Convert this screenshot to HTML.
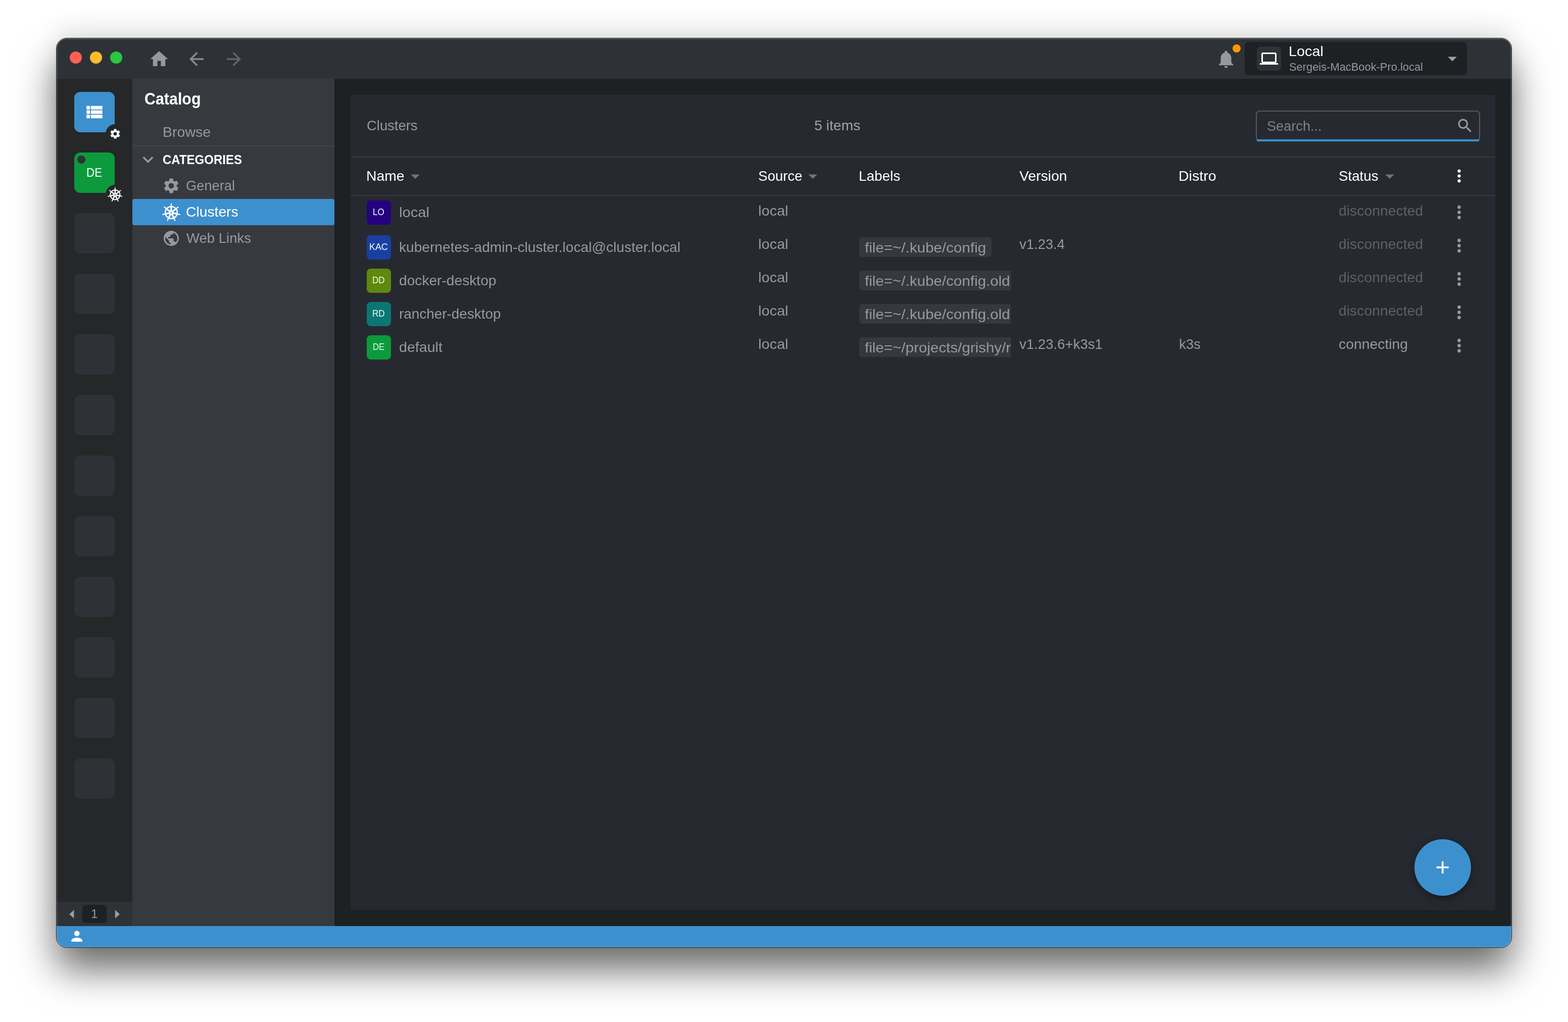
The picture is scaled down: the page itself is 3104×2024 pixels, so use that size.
<!DOCTYPE html>
<html lang="en"><head><meta charset="utf-8"><title>Lens - Catalog</title>
<style>
html,body{margin:0;padding:0;}
body{width:3104px;height:2024px;background:#ffffff;position:relative;overflow:hidden;font-family:"Liberation Sans", sans-serif;}
#shadow{position:absolute;left:112px;top:76px;width:2880px;height:1800px;border-radius:20px;
  box-shadow:0 43px 77px rgba(0,0,0,.6),0 -31px 41px rgba(0,0,0,.052);}
#win{position:absolute;left:0;top:0;width:3104px;height:2024px;clip-path:inset(76px 112px 148px 112px round 20px);will-change:transform;}
#rim{position:absolute;left:111px;top:75px;width:2882px;height:1802px;border-radius:21px;box-sizing:border-box;
  border:1px solid rgba(0,0,0,.85);
  box-shadow:inset 0 1px 0 rgba(255,255,255,.14),inset 0 0 0 1px rgba(255,255,255,.2),inset 0 0 0 2px rgba(255,255,255,.07);pointer-events:none;}
.b{position:absolute;}
.i{position:absolute;display:block;}
.t{position:absolute;white-space:nowrap;font-family:"Liberation Sans", sans-serif;transform-origin:0 0;}
</style></head>
<body>
<div id="shadow"></div>
<div id="win">
<header id="titlebar">
<div class="b" style="left:112px;top:76px;width:2880px;height:80px;background:#2e3136;"></div>
<div class="b" style="left:138px;top:102px;width:24px;height:24px;background:#fe5f57;border-radius:50%;"></div>
<div class="b" style="left:178px;top:102px;width:24px;height:24px;background:#febc2e;border-radius:50%;"></div>
<div class="b" style="left:218px;top:102px;width:24px;height:24px;background:#28c840;border-radius:50%;"></div>
<svg class="i" style="left:294.00px;top:96.00px;width:42px;height:42px" viewBox="0 0 24 24"><path fill="#959aa1" d="M10 20v-6h4v6h5v-8h3L12 3 2 12h3v8z"/></svg>
<svg class="i" style="left:368.00px;top:96.00px;width:42px;height:42px;opacity:0.85" viewBox="0 0 24 24"><path fill="#959aa1" d="M20 11H7.83l5.59-5.59L12 4l-8 8 8 8 1.41-1.41L7.83 13H20v-2z"/></svg>
<svg class="i" style="left:442.00px;top:96.00px;width:42px;height:42px;opacity:0.5" viewBox="0 0 24 24"><path fill="#959aa1" d="M12 4l-1.41 1.41L16.17 11H4v2h12.17l-5.58 5.59L12 20l8-8z"/></svg>
<svg class="i" style="left:2406.00px;top:95.70px;width:42px;height:42px" viewBox="0 0 24 24"><path fill="#959aa1" d="M12 22c1.1 0 2-.9 2-2h-4c0 1.1.89 2 2 2zm6-6v-5c0-3.07-1.64-5.64-4.5-6.32V4c0-.83-.67-1.5-1.5-1.5s-1.5.67-1.5 1.5v.68C7.63 5.36 6 7.92 6 11v5l-2 2v1h16v-1l-2-2z"/></svg>
<div class="b" style="left:2440px;top:88px;width:16px;height:16px;background:#ff9800;border-radius:50%;"></div>
<div class="b" style="left:2464px;top:83px;width:440px;height:66px;background:#1e2124;border-radius:8px;"></div>
<div class="b" style="left:2488px;top:92px;width:48px;height:48px;background:#2e3136;border-radius:8px;"></div>
<svg class="i" style="left:2494.00px;top:98.00px;width:36px;height:36px" viewBox="0 0 24 24"><path fill="#ffffff" d="M20 18c1.1 0 1.99-.9 1.99-2L22 6c0-1.1-.9-2-2-2H4c-1.1 0-2 .9-2 2v10c0 1.1.9 2 2 2H0v2h24v-2h-4zM4 6h16v10H4V6z"/></svg>
<span class="t" style="left:2551.08px;top:85px;font-size:28.5px;line-height:32px;color:#ffffff;transform:scaleX(1.0123);">Local</span>
<span class="t" style="left:2551.52px;top:120px;font-size:22.4px;line-height:25px;color:#959aa1;transform:scaleX(0.9766);">Sergeis-MacBook-Pro.local</span>
<svg class="i" style="left:2854.00px;top:94.50px;width:42px;height:42px" viewBox="0 0 24 24"><path fill="#a0a4a8" d="M7 10l5 5 5-5z"/></svg>
</header>
<nav id="hotbar">
<div class="b" style="left:112px;top:156px;width:150px;height:1678px;background:#252729;"></div>
<div class="b" style="left:147px;top:182px;width:80px;height:80px;background:#3d90ce;border-radius:12px;"></div>
<svg class="i" style="left:166.00px;top:201.00px;width:42px;height:42px" viewBox="0 0 24 24"><path fill="#ffffff" d="M3 14h4v-4H3v4zm0 5h4v-4H3v4zM3 9h4V5H3v4zm5 5h13v-4H8v4zm0 5h13v-4H8v4zM8 5v4h13V5H8z"/></svg>
<div class="b" style="left:209px;top:246px;width:38px;height:38px;background:#252729;border-radius:50%;"></div>
<svg class="i" style="left:216.00px;top:253.00px;width:24px;height:24px" viewBox="0 0 24 24"><path fill="#ffffff" d="M19.14 12.94c.04-.3.06-.61.06-.94 0-.32-.02-.64-.07-.94l2.03-1.58c.18-.14.23-.41.12-.61l-1.92-3.32c-.12-.22-.37-.29-.59-.22l-2.39.96c-.5-.38-1.03-.7-1.62-.94l-.36-2.54c-.04-.24-.24-.41-.48-.41h-3.84c-.24 0-.43.17-.47.41l-.36 2.54c-.59.24-1.13.57-1.62.94l-2.39-.96c-.22-.08-.47 0-.59.22L2.74 8.87c-.12.21-.08.47.12.61l2.03 1.58c-.05.3-.09.63-.09.94s.02.64.07.94l-2.03 1.58c-.18.14-.23.41-.12.61l1.92 3.32c.12.22.37.29.59.22l2.39-.96c.5.38 1.03.7 1.62.94l.36 2.54c.05.24.24.41.48.41h3.84c.24 0 .44-.17.47-.41l.36-2.54c.59-.24 1.13-.56 1.62-.94l2.39.96c.22.08.47 0 .59-.22l1.92-3.32c.12-.22.07-.47-.12-.61l-2.01-1.58zM12 15.6c-1.98 0-3.6-1.62-3.6-3.6s1.62-3.6 3.6-3.6 3.6 1.62 3.6 3.6-1.62 3.6-3.6 3.6z"/></svg>
<div class="b" style="left:147px;top:302px;width:80px;height:80px;background:#0c9a3c;border-radius:12px;"></div>
<div class="b" style="left:153px;top:308px;width:16px;height:16px;background:#2e3136;border-radius:50%;"></div>
<span class="t" style="left:171.07px;top:328px;font-size:24.43px;line-height:27px;color:#ffffff;transform:scaleX(0.9167);">DE</span>
<div class="b" style="left:209px;top:366px;width:38px;height:38px;background:#252729;border-radius:50%;"></div>
<svg class="i" style="left:210.18px;top:367.58px;width:35.64px;height:35.64px" viewBox="-17.82 -17.82 35.64 35.64"><circle cx="0" cy="0" r="9.64" fill="none" stroke="#ffffff" stroke-width="2.03"/><circle cx="0" cy="0" r="2.43" fill="none" stroke="#ffffff" stroke-width="2.35"/><line x1="0.00" y1="-2.92" x2="0.00" y2="-9.64" stroke="#ffffff" stroke-width="2.67"/><line x1="0.00" y1="-9.64" x2="0.00" y2="-14.01" stroke="#ffffff" stroke-width="1.78" stroke-linecap="round"/><line x1="2.28" y1="-1.82" x2="7.54" y2="-6.01" stroke="#ffffff" stroke-width="2.67"/><line x1="7.54" y1="-6.01" x2="10.96" y2="-8.74" stroke="#ffffff" stroke-width="1.78" stroke-linecap="round"/><line x1="2.84" y1="0.65" x2="9.40" y2="2.14" stroke="#ffffff" stroke-width="2.67"/><line x1="9.40" y1="2.14" x2="13.66" y2="3.12" stroke="#ffffff" stroke-width="1.78" stroke-linecap="round"/><line x1="1.27" y1="2.63" x2="4.18" y2="8.68" stroke="#ffffff" stroke-width="2.67"/><line x1="4.18" y1="8.68" x2="6.08" y2="12.63" stroke="#ffffff" stroke-width="1.78" stroke-linecap="round"/><line x1="-1.27" y1="2.63" x2="-4.18" y2="8.68" stroke="#ffffff" stroke-width="2.67"/><line x1="-4.18" y1="8.68" x2="-6.08" y2="12.63" stroke="#ffffff" stroke-width="1.78" stroke-linecap="round"/><line x1="-2.84" y1="0.65" x2="-9.40" y2="2.14" stroke="#ffffff" stroke-width="2.67"/><line x1="-9.40" y1="2.14" x2="-13.66" y2="3.12" stroke="#ffffff" stroke-width="1.78" stroke-linecap="round"/><line x1="-2.28" y1="-1.82" x2="-7.54" y2="-6.01" stroke="#ffffff" stroke-width="2.67"/><line x1="-7.54" y1="-6.01" x2="-10.96" y2="-8.74" stroke="#ffffff" stroke-width="1.78" stroke-linecap="round"/></svg>
<div class="b" style="left:147px;top:422px;width:80px;height:80px;background:#2e3136;border-radius:12px;"></div>
<div class="b" style="left:147px;top:542px;width:80px;height:80px;background:#2e3136;border-radius:12px;"></div>
<div class="b" style="left:147px;top:662px;width:80px;height:80px;background:#2e3136;border-radius:12px;"></div>
<div class="b" style="left:147px;top:782px;width:80px;height:80px;background:#2e3136;border-radius:12px;"></div>
<div class="b" style="left:147px;top:902px;width:80px;height:80px;background:#2e3136;border-radius:12px;"></div>
<div class="b" style="left:147px;top:1022px;width:80px;height:80px;background:#2e3136;border-radius:12px;"></div>
<div class="b" style="left:147px;top:1142px;width:80px;height:80px;background:#2e3136;border-radius:12px;"></div>
<div class="b" style="left:147px;top:1262px;width:80px;height:80px;background:#2e3136;border-radius:12px;"></div>
<div class="b" style="left:147px;top:1382px;width:80px;height:80px;background:#2e3136;border-radius:12px;"></div>
<div class="b" style="left:147px;top:1502px;width:80px;height:80px;background:#2e3136;border-radius:12px;"></div>
<div class="b" style="left:112px;top:1786px;width:150px;height:48px;background:#2e3136;"></div>
<div class="b" style="left:163px;top:1792px;width:48px;height:36px;background:#1e2124;border-radius:7px;"></div>
<span class="t" style="left:180.00px;top:1796px;font-size:24.43px;line-height:27px;color:#959aa1;">1</span>
<svg class="i" style="left:136.2px;top:1800.6px;width:11.3px;height:18.8px" viewBox="0 0 12 20"><path fill="#9c9fa3" d="M11 1L1.4 10 11 19z"/></svg>
<svg class="i" style="left:226.8px;top:1800.6px;width:11.3px;height:18.8px" viewBox="0 0 12 20"><path fill="#9c9fa3" d="M1 1l9.6 9L1 19z"/></svg>
</nav>
<aside id="sidebar">
<div class="b" style="left:262px;top:156px;width:400px;height:1678px;background:#36393e;"></div>
<span class="t" style="left:286.07px;top:178px;font-size:32.58px;line-height:36px;color:#ffffff;font-weight:700;transform:scaleX(0.9334);">Catalog</span>
<span class="t" style="left:321.80px;top:245px;font-size:28.5px;line-height:32px;color:#959aa1;transform:scaleX(1.0024);">Browse</span>
<div class="b" style="left:262px;top:288px;width:400px;height:2px;background:#414448;"></div>
<svg class="i" style="left:272.00px;top:295.00px;width:42px;height:42px" viewBox="0 0 24 24"><path fill="#959aa1" d="M16.59 8.59L12 13.17 7.41 8.59 6 10l6 6 6-6z"/></svg>
<span class="t" style="left:321.89px;top:301px;font-size:26.47px;line-height:30px;color:#ffffff;font-weight:700;transform:scaleX(0.9073);">CATEGORIES</span>
<svg class="i" style="left:321.00px;top:350.20px;width:36px;height:36px" viewBox="0 0 24 24"><path fill="#959aa1" d="M19.14 12.94c.04-.3.06-.61.06-.94 0-.32-.02-.64-.07-.94l2.03-1.58c.18-.14.23-.41.12-.61l-1.92-3.32c-.12-.22-.37-.29-.59-.22l-2.39.96c-.5-.38-1.03-.7-1.62-.94l-.36-2.54c-.04-.24-.24-.41-.48-.41h-3.84c-.24 0-.43.17-.47.41l-.36 2.54c-.59.24-1.13.57-1.62.94l-2.39-.96c-.22-.08-.47 0-.59.22L2.74 8.87c-.12.21-.08.47.12.61l2.03 1.58c-.05.3-.09.63-.09.94s.02.64.07.94l-2.03 1.58c-.18.14-.23.41-.12.61l1.92 3.32c.12.22.37.29.59.22l2.39-.96c.5.38 1.03.7 1.62.94l.36 2.54c.05.24.24.41.48.41h3.84c.24 0 .44-.17.47-.41l.36-2.54c.59-.24 1.13-.56 1.62-.94l2.39.96c.22.08.47 0 .59-.22l1.92-3.32c.12-.22.07-.47-.12-.61l-2.01-1.58zM12 15.6c-1.98 0-3.6-1.62-3.6-3.6s1.62-3.6 3.6-3.6 3.6 1.62 3.6 3.6-1.62 3.6-3.6 3.6z"/></svg>
<span class="t" style="left:368.04px;top:351px;font-size:28.5px;line-height:32px;color:#959aa1;transform:scaleX(0.9570);">General</span>
<div class="b" style="left:262px;top:394px;width:400px;height:52px;background:#3d90ce;border-radius:4px;"></div>
<svg class="i" style="left:317.10px;top:398.90px;width:44.00px;height:44.00px" viewBox="-22.00 -22.00 44.00 44.00"><circle cx="0" cy="0" r="11.90" fill="none" stroke="#ffffff" stroke-width="2.50"/><circle cx="0" cy="0" r="3.00" fill="none" stroke="#ffffff" stroke-width="2.90"/><line x1="0.00" y1="-3.60" x2="0.00" y2="-11.90" stroke="#ffffff" stroke-width="3.30"/><line x1="0.00" y1="-11.90" x2="0.00" y2="-17.30" stroke="#ffffff" stroke-width="2.20" stroke-linecap="round"/><line x1="2.81" y1="-2.24" x2="9.30" y2="-7.42" stroke="#ffffff" stroke-width="3.30"/><line x1="9.30" y1="-7.42" x2="13.53" y2="-10.79" stroke="#ffffff" stroke-width="2.20" stroke-linecap="round"/><line x1="3.51" y1="0.80" x2="11.60" y2="2.65" stroke="#ffffff" stroke-width="3.30"/><line x1="11.60" y1="2.65" x2="16.87" y2="3.85" stroke="#ffffff" stroke-width="2.20" stroke-linecap="round"/><line x1="1.56" y1="3.24" x2="5.16" y2="10.72" stroke="#ffffff" stroke-width="3.30"/><line x1="5.16" y1="10.72" x2="7.51" y2="15.59" stroke="#ffffff" stroke-width="2.20" stroke-linecap="round"/><line x1="-1.56" y1="3.24" x2="-5.16" y2="10.72" stroke="#ffffff" stroke-width="3.30"/><line x1="-5.16" y1="10.72" x2="-7.51" y2="15.59" stroke="#ffffff" stroke-width="2.20" stroke-linecap="round"/><line x1="-3.51" y1="0.80" x2="-11.60" y2="2.65" stroke="#ffffff" stroke-width="3.30"/><line x1="-11.60" y1="2.65" x2="-16.87" y2="3.85" stroke="#ffffff" stroke-width="2.20" stroke-linecap="round"/><line x1="-2.81" y1="-2.24" x2="-9.30" y2="-7.42" stroke="#ffffff" stroke-width="3.30"/><line x1="-9.30" y1="-7.42" x2="-13.53" y2="-10.79" stroke="#ffffff" stroke-width="2.20" stroke-linecap="round"/></svg>
<span class="t" style="left:368.21px;top:403px;font-size:28.5px;line-height:32px;color:#ffffff;transform:scaleX(0.9915);">Clusters</span>
<svg class="i" style="left:321.00px;top:454.20px;width:36px;height:36px" viewBox="0 0 24 24"><path fill="#959aa1" d="M12 2C6.48 2 2 6.48 2 12s4.48 10 10 10 10-4.48 10-10S17.52 2 12 2zm-1 17.93c-3.95-.49-7-3.85-7-7.93 0-.62.08-1.21.21-1.79L9 15v1c0 1.1.9 2 2 2v1.93zm6.9-2.54c-.26-.81-1-1.39-1.9-1.39h-1v-3c0-.55-.45-1-1-1H8v-2h2c.55 0 1-.45 1-1V7h2c1.1 0 2-.9 2-2v-.41c2.93 1.19 5 4.06 5 7.41 0 2.08-.8 3.97-2.1 5.39z"/></svg>
<span class="t" style="left:369.20px;top:455px;font-size:28.5px;line-height:32px;color:#959aa1;transform:scaleX(0.9661);">Web Links</span>
</aside>
<main id="catalog">
<div class="b" style="left:662px;top:156px;width:2330px;height:1678px;background:#1e2124;"></div>
<div class="b" style="left:694px;top:188px;width:2266px;height:1614px;background:#262a30;"></div>
<span class="t" style="left:725.94px;top:232px;font-size:28.5px;line-height:32px;color:#959aa1;transform:scaleX(0.9615);">Clusters</span>
<span class="t" style="left:1611.61px;top:232px;font-size:28.5px;line-height:32px;color:#a0a3a7;transform:scaleX(0.9933);">5 items</span>
<div class="b" style="left:2486px;top:219px;width:444px;height:61px;background:transparent;border-radius:8px;box-sizing:border-box;border:2px solid #565b61;"></div>
<div class="b" style="left:2488px;top:276px;width:440px;height:4px;background:#3d90ce;"></div>
<span class="t" style="left:2507.75px;top:233px;font-size:28.5px;line-height:32px;color:#7f8388;transform:scaleX(0.9520);">Search...</span>
<svg class="i" style="left:2882.00px;top:230.80px;width:36px;height:36px" viewBox="0 0 24 24"><path fill="#9a9da1" d="M15.5 14h-.79l-.28-.27C15.41 12.59 16 11.11 16 9.5 16 5.91 13.09 3 9.5 3S3 5.91 3 9.5 5.91 16 9.5 16c1.61 0 3.09-.59 4.23-1.57l.27.28v.79l5 4.99L20.49 19l-4.99-5zm-6 0C7.01 14 5 11.99 5 9.5S7.01 5 9.5 5 14 7.01 14 9.5 11.99 14 9.5 14z"/></svg>
<div class="b" style="left:694px;top:310px;width:2266px;height:2px;background:#373a3e;"></div>
<span class="t" style="left:725.01px;top:332px;font-size:28.5px;line-height:32px;color:#ffffff;transform:scaleX(0.9949);">Name</span>
<svg class="i" style="left:800.80px;top:327.60px;width:42px;height:42px" viewBox="0 0 24 24"><path fill="#6f747a" d="M7 10l5 5 5-5z"/></svg>
<span class="t" style="left:1500.63px;top:332px;font-size:28.5px;line-height:32px;color:#ffffff;transform:scaleX(0.9678);">Source</span>
<svg class="i" style="left:1587.60px;top:327.60px;width:42px;height:42px" viewBox="0 0 24 24"><path fill="#6f747a" d="M7 10l5 5 5-5z"/></svg>
<span class="t" style="left:1699.94px;top:332px;font-size:28.5px;line-height:32px;color:#ffffff;transform:scaleX(0.9788);">Labels</span>
<span class="t" style="left:2017.90px;top:332px;font-size:28.5px;line-height:32px;color:#ffffff;transform:scaleX(0.9924);">Version</span>
<span class="t" style="left:2333.00px;top:332px;font-size:28.5px;line-height:32px;color:#ffffff;transform:scaleX(1.0018);">Distro</span>
<span class="t" style="left:2650.03px;top:332px;font-size:28.5px;line-height:32px;color:#ffffff;transform:scaleX(0.9730);">Status</span>
<svg class="i" style="left:2730.00px;top:327.60px;width:42px;height:42px" viewBox="0 0 24 24"><path fill="#6f747a" d="M7 10l5 5 5-5z"/></svg>
<svg class="i" style="left:2869.10px;top:329.40px;width:39px;height:39px" viewBox="0 0 24 24"><path fill="#ffffff" d="M12 8c1.1 0 2-.9 2-2s-.9-2-2-2-2 .9-2 2 .9 2 2 2zm0 2c-1.1 0-2 .9-2 2s.9 2 2 2 2-.9 2-2-.9-2-2-2zm0 6c-1.1 0-2 .9-2 2s.9 2 2 2 2-.9 2-2-.9-2-2-2z"/></svg>
<div class="b" style="left:694px;top:386px;width:2266px;height:2px;background:#373a3e;"></div>
<div class="b" style="left:726px;top:397px;width:48px;height:48px;background:#25007f;border-radius:8px;"></div>
<span class="t" style="left:738.38px;top:409px;font-size:18.32px;line-height:21px;color:#fdf5ff;transform:scaleX(0.9230);">LO</span>
<span class="t" style="left:789.77px;top:404px;font-size:28.5px;line-height:32px;color:#959aa1;transform:scaleX(1.0252);">local</span>
<span class="t" style="left:1501.19px;top:401px;font-size:28.5px;line-height:32px;color:#959aa1;transform:scaleX(1.0127);">local</span>
<span class="t" style="left:2650.00px;top:401px;font-size:28.5px;line-height:32px;color:#5d6166;transform:scaleX(0.9952);">disconnected</span>
<svg class="i" style="left:2868.10px;top:400.10px;width:41px;height:41px" viewBox="0 0 24 24"><path fill="#959aa1" d="M12 8c1.1 0 2-.9 2-2s-.9-2-2-2-2 .9-2 2 .9 2 2 2zm0 2c-1.1 0-2 .9-2 2s.9 2 2 2 2-.9 2-2-.9-2-2-2zm0 6c-1.1 0-2 .9-2 2s.9 2 2 2 2-.9 2-2-.9-2-2-2z"/></svg>
<div class="b" style="left:726px;top:466px;width:48px;height:48px;background:#1a3fa3;border-radius:8px;"></div>
<span class="t" style="left:731.22px;top:478px;font-size:18.32px;line-height:21px;color:#f4f8ff;transform:scaleX(0.9773);">KAC</span>
<span class="t" style="left:789.81px;top:473px;font-size:28.5px;line-height:32px;color:#959aa1;transform:scaleX(0.9868);">kubernetes-admin-cluster.local@cluster.local</span>
<span class="t" style="left:1501.19px;top:467px;font-size:28.5px;line-height:32px;color:#959aa1;transform:scaleX(1.0127);">local</span>
<div class="b" style="left:1701px;top:470px;width:300px;height:39px;overflow:hidden"><div class="b" style="left:0;top:0;width:262px;height:39px;background:#35383d;border-radius:6px"></div><span class="t" style="left:11.20px;top:4px;font-size:28.5px;line-height:32px;color:#959aa1;transform:scaleX(1.0370);">file=~/.kube/config</span></div>
<span class="t" style="left:2017.90px;top:467px;font-size:28.5px;line-height:32px;color:#959aa1;transform:scaleX(0.9590);">v1.23.4</span>
<span class="t" style="left:2650.00px;top:467px;font-size:28.5px;line-height:32px;color:#5d6166;transform:scaleX(0.9952);">disconnected</span>
<svg class="i" style="left:2868.10px;top:466.10px;width:41px;height:41px" viewBox="0 0 24 24"><path fill="#959aa1" d="M12 8c1.1 0 2-.9 2-2s-.9-2-2-2-2 .9-2 2 .9 2 2 2zm0 2c-1.1 0-2 .9-2 2s.9 2 2 2 2-.9 2-2-.9-2-2-2zm0 6c-1.1 0-2 .9-2 2s.9 2 2 2 2-.9 2-2-.9-2-2-2z"/></svg>
<div class="b" style="left:726px;top:532px;width:48px;height:48px;background:#5f880e;border-radius:8px;"></div>
<span class="t" style="left:737.32px;top:544px;font-size:18.32px;line-height:21px;color:#f1ffd6;transform:scaleX(0.9316);">DD</span>
<span class="t" style="left:789.81px;top:539px;font-size:28.5px;line-height:32px;color:#959aa1;transform:scaleX(0.9876);">docker-desktop</span>
<span class="t" style="left:1501.19px;top:533px;font-size:28.5px;line-height:32px;color:#959aa1;transform:scaleX(1.0127);">local</span>
<div class="b" style="left:1701px;top:536px;width:300px;height:39px;overflow:hidden"><div class="b" style="left:0;top:0;width:360px;height:39px;background:#35383d;border-radius:6px"></div><span class="t" style="left:11.20px;top:4px;font-size:28.5px;line-height:32px;color:#959aa1;transform:scaleX(1.0370);">file=~/.kube/config.old</span></div>
<span class="t" style="left:2650.00px;top:533px;font-size:28.5px;line-height:32px;color:#5d6166;transform:scaleX(0.9952);">disconnected</span>
<svg class="i" style="left:2868.10px;top:532.10px;width:41px;height:41px" viewBox="0 0 24 24"><path fill="#959aa1" d="M12 8c1.1 0 2-.9 2-2s-.9-2-2-2-2 .9-2 2 .9 2 2 2zm0 2c-1.1 0-2 .9-2 2s.9 2 2 2 2-.9 2-2-.9-2-2-2zm0 6c-1.1 0-2 .9-2 2s.9 2 2 2 2-.9 2-2-.9-2-2-2z"/></svg>
<div class="b" style="left:726px;top:598px;width:48px;height:48px;background:#0c7672;border-radius:8px;"></div>
<span class="t" style="left:737.32px;top:610px;font-size:18.32px;line-height:21px;color:#dcfffb;transform:scaleX(0.9316);">RD</span>
<span class="t" style="left:789.82px;top:605px;font-size:28.5px;line-height:32px;color:#959aa1;transform:scaleX(0.9785);">rancher-desktop</span>
<span class="t" style="left:1501.19px;top:599px;font-size:28.5px;line-height:32px;color:#959aa1;transform:scaleX(1.0127);">local</span>
<div class="b" style="left:1701px;top:602px;width:300px;height:39px;overflow:hidden"><div class="b" style="left:0;top:0;width:360px;height:39px;background:#35383d;border-radius:6px"></div><span class="t" style="left:11.20px;top:4px;font-size:28.5px;line-height:32px;color:#959aa1;transform:scaleX(1.0370);">file=~/.kube/config.old</span></div>
<span class="t" style="left:2650.00px;top:599px;font-size:28.5px;line-height:32px;color:#5d6166;transform:scaleX(0.9952);">disconnected</span>
<svg class="i" style="left:2868.10px;top:598.10px;width:41px;height:41px" viewBox="0 0 24 24"><path fill="#959aa1" d="M12 8c1.1 0 2-.9 2-2s-.9-2-2-2-2 .9-2 2 .9 2 2 2zm0 2c-1.1 0-2 .9-2 2s.9 2 2 2 2-.9 2-2-.9-2-2-2zm0 6c-1.1 0-2 .9-2 2s.9 2 2 2 2-.9 2-2-.9-2-2-2z"/></svg>
<div class="b" style="left:726px;top:664px;width:48px;height:48px;background:#0c9a3c;border-radius:8px;"></div>
<span class="t" style="left:738.09px;top:676px;font-size:18.32px;line-height:21px;color:#dcffe8;transform:scaleX(0.9082);">DE</span>
<span class="t" style="left:789.80px;top:671px;font-size:28.5px;line-height:32px;color:#959aa1;transform:scaleX(1.0041);">default</span>
<span class="t" style="left:1501.19px;top:665px;font-size:28.5px;line-height:32px;color:#959aa1;transform:scaleX(1.0127);">local</span>
<div class="b" style="left:1701px;top:668px;width:300px;height:39px;overflow:hidden"><div class="b" style="left:0;top:0;width:360px;height:39px;background:#35383d;border-radius:6px"></div><span class="t" style="left:11.20px;top:4px;font-size:28.5px;line-height:32px;color:#959aa1;transform:scaleX(1.0370);">file=~/projects/grishy/r</span></div>
<span class="t" style="left:2017.90px;top:665px;font-size:28.5px;line-height:32px;color:#959aa1;transform:scaleX(0.9659);">v1.23.6+k3s1</span>
<span class="t" style="left:2334.03px;top:665px;font-size:28.5px;line-height:32px;color:#959aa1;transform:scaleX(0.9675);">k3s</span>
<span class="t" style="left:2650.01px;top:665px;font-size:28.5px;line-height:32px;color:#959aa1;transform:scaleX(0.9948);">connecting</span>
<svg class="i" style="left:2868.10px;top:664.10px;width:41px;height:41px" viewBox="0 0 24 24"><path fill="#959aa1" d="M12 8c1.1 0 2-.9 2-2s-.9-2-2-2-2 .9-2 2 .9 2 2 2zm0 2c-1.1 0-2 .9-2 2s.9 2 2 2 2-.9 2-2-.9-2-2-2zm0 6c-1.1 0-2 .9-2 2s.9 2 2 2 2-.9 2-2-.9-2-2-2z"/></svg>
<div class="b" style="left:2800px;top:1662px;width:112px;height:112px;background:#3d90ce;border-radius:50%;box-shadow:0 6px 18px rgba(0,0,0,.3),0 2px 8px rgba(0,0,0,.18);"></div>
<svg class="i" style="left:2835.25px;top:1697.15px;width:41.5px;height:41.5px" viewBox="0 0 24 24"><path fill="#ffffff" d="M19 13h-6v6h-2v-6H5v-2h6V5h2v6h6v2z"/></svg>
</main>
<footer id="statusbar">
<div class="b" style="left:112px;top:1834px;width:2880px;height:42px;background:#3d90ce;"></div>
<svg class="i" style="left:135.80px;top:1838.10px;width:32.4px;height:32.4px" viewBox="0 0 24 24"><path fill="#ffffff" d="M12 12c2.21 0 4-1.79 4-4s-1.79-4-4-4-4 1.79-4 4 1.79 4 4 4zm0 2c-2.67 0-8 1.34-8 4v2h16v-2c0-2.66-5.33-4-8-4z"/></svg>
</footer>
</div>
<div id="rim"></div>
</body></html>
